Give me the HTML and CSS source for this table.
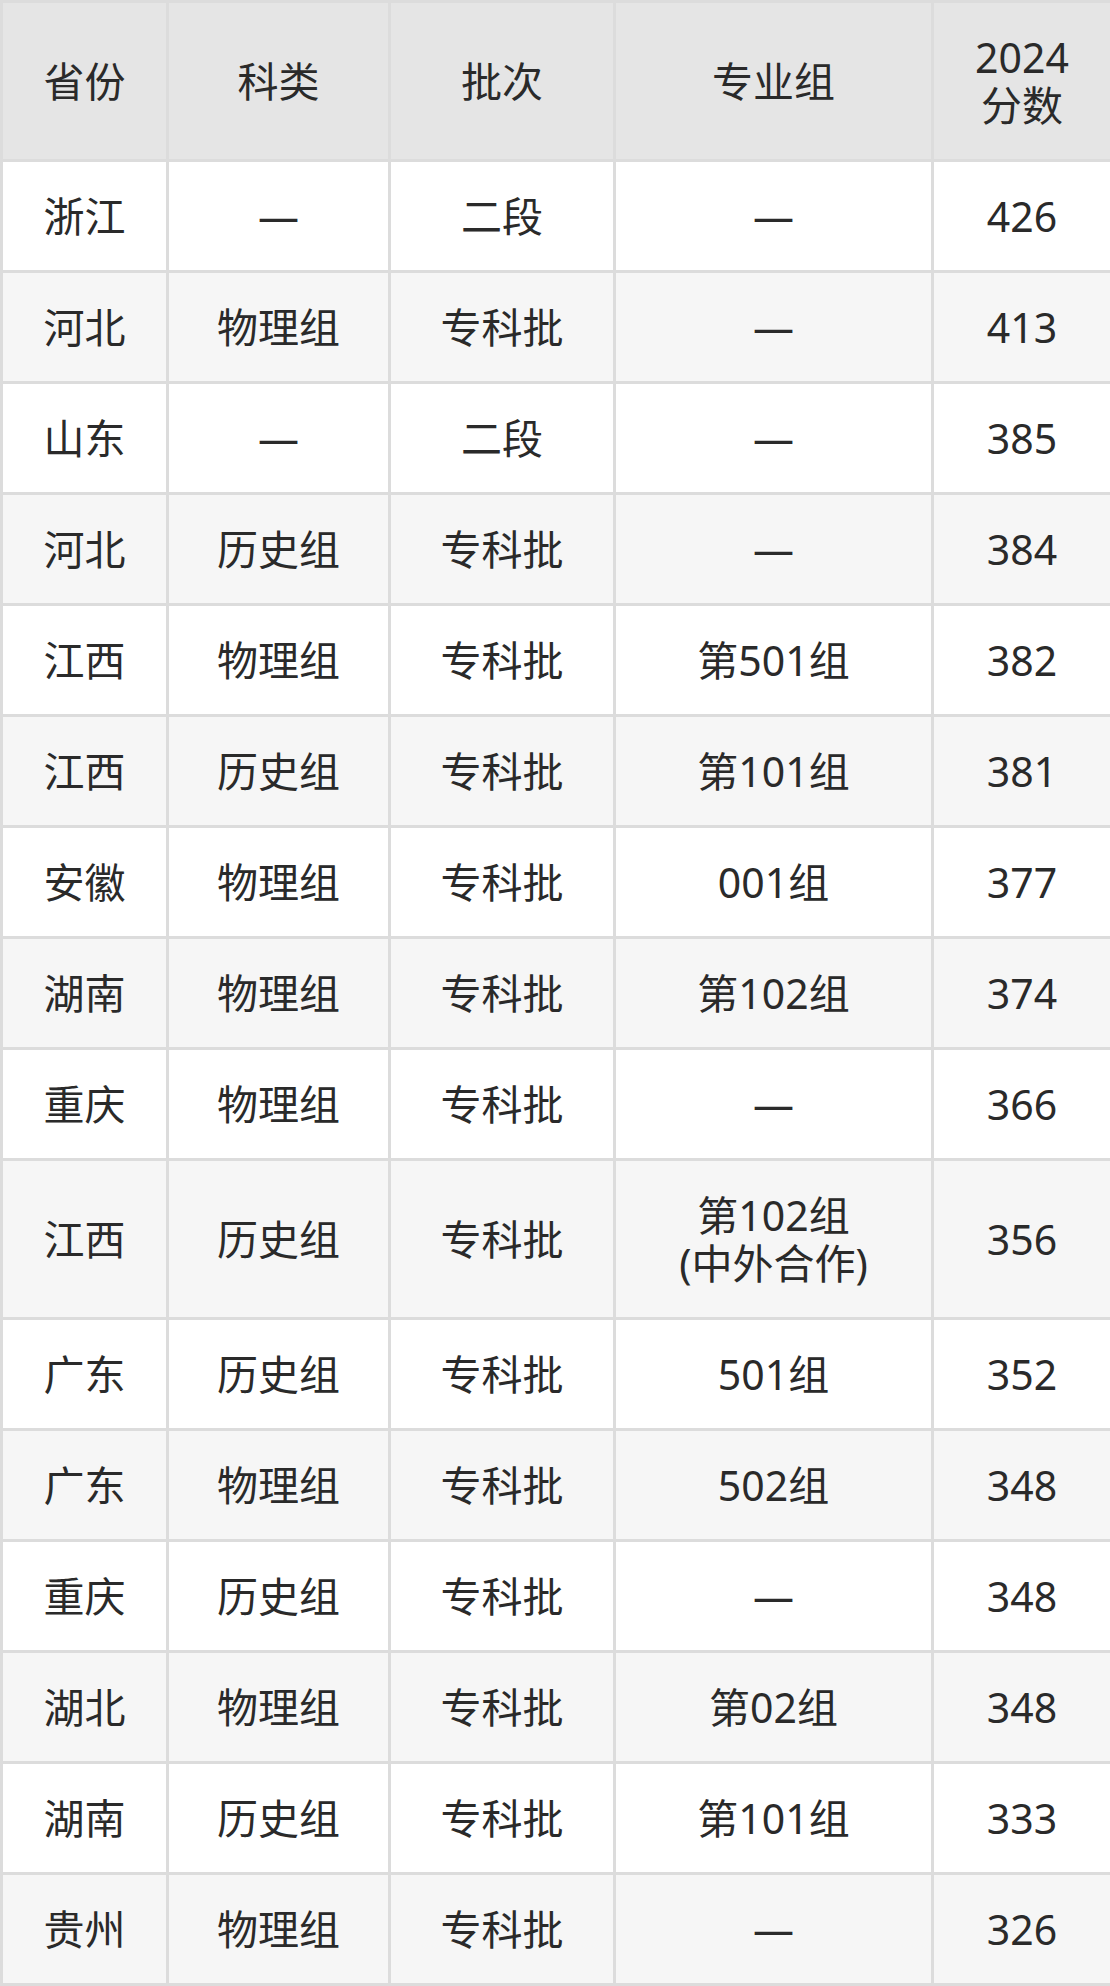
FILE: index.html
```html
<!DOCTYPE html>
<html lang="zh-CN">
<head>
<meta charset="utf-8">
<title>2024分数</title>
<link rel="stylesheet" href="styles.css">
</head>
<body>
<table class="score-table">
  <colgroup>
    <col class="c1"><col class="c2"><col class="c3"><col class="c4"><col class="c5">
  </colgroup>
  <thead>
    <tr><th>省份</th><th>科类</th><th>批次</th><th>专业组</th><th><span class="ln">2024</span><span class="ln">分数</span></th></tr>
  </thead>
  <tbody>
    <tr><td>浙江</td><td>—</td><td>二段</td><td>—</td><td>426</td></tr>
    <tr><td>河北</td><td>物理组</td><td>专科批</td><td>—</td><td>413</td></tr>
    <tr><td>山东</td><td>—</td><td>二段</td><td>—</td><td>385</td></tr>
    <tr><td>河北</td><td>历史组</td><td>专科批</td><td>—</td><td>384</td></tr>
    <tr><td>江西</td><td>物理组</td><td>专科批</td><td>第501组</td><td>382</td></tr>
    <tr><td>江西</td><td>历史组</td><td>专科批</td><td>第101组</td><td>381</td></tr>
    <tr><td>安徽</td><td>物理组</td><td>专科批</td><td>001组</td><td>377</td></tr>
    <tr><td>湖南</td><td>物理组</td><td>专科批</td><td>第102组</td><td>374</td></tr>
    <tr><td>重庆</td><td>物理组</td><td>专科批</td><td>—</td><td>366</td></tr>
    <tr><td>江西</td><td>历史组</td><td>专科批</td><td><span class="ln">第102组</span><span class="ln">(中外合作)</span></td><td>356</td></tr>
    <tr><td>广东</td><td>历史组</td><td>专科批</td><td>501组</td><td>352</td></tr>
    <tr><td>广东</td><td>物理组</td><td>专科批</td><td>502组</td><td>348</td></tr>
    <tr><td>重庆</td><td>历史组</td><td>专科批</td><td>—</td><td>348</td></tr>
    <tr><td>湖北</td><td>物理组</td><td>专科批</td><td>第02组</td><td>348</td></tr>
    <tr><td>湖南</td><td>历史组</td><td>专科批</td><td>第101组</td><td>333</td></tr>
    <tr><td>贵州</td><td>物理组</td><td>专科批</td><td>—</td><td>326</td></tr>
  </tbody>
</table>
</body>
</html>
```

FILE: styles.css
```css
html, body {
  margin: 0;
  padding: 0;
  background: #ffffff;
}

body {
  font-family: "Noto Sans", "Noto Sans CJK SC", sans-serif;
  color: #2a2a2a;
}

.score-table {
  width: 1110px;
  border-collapse: collapse;
  table-layout: fixed;
  font-size: 41px;
  line-height: 48px;
}

.c1 { width: 166px; }
.c2 { width: 222px; }
.c3 { width: 225px; }
.c4 { width: 318px; }
.c5 { width: 179px; }

.score-table th,
.score-table td {
  border: 3px solid #dcdcdc;
  padding: 30px 0;
  text-align: center;
  vertical-align: middle;
  font-weight: 400;
}

.score-table th {
  background: #e5e5e5;
}

.ln {
  display: block;
  height: 48px;
}

.score-table tbody tr:nth-child(odd) td {
  background: #ffffff;
}

.score-table tbody tr:nth-child(even) td {
  background: #f6f6f6;
}
```
